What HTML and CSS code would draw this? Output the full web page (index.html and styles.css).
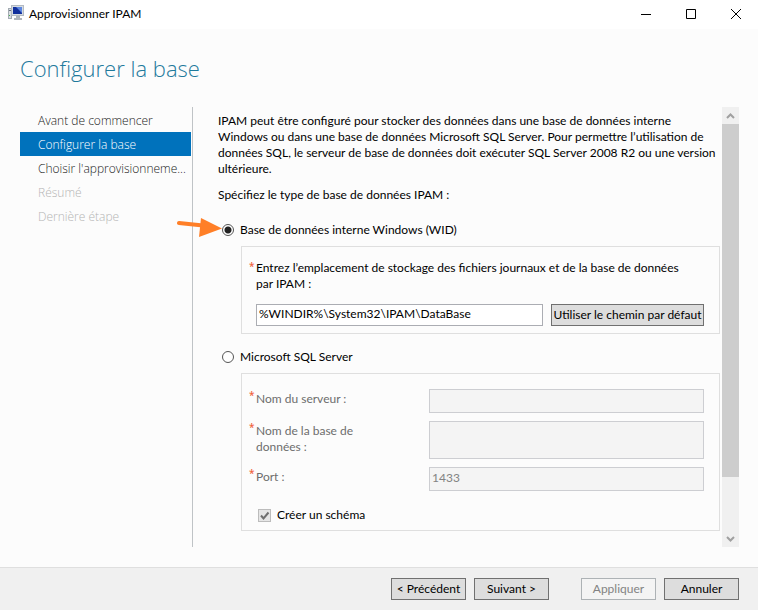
FILE: index.html
```html
<!DOCTYPE html>
<html lang="fr">
<head>
  <meta charset="UTF-8" />
  <meta name="viewport" content="width=device-width, initial-scale=1.0"/>
  <title>Approvisionner IPAM</title>
  <link rel="stylesheet" href="styles.css">
</head>
<body>
  <header class="titlebar">
    <svg class="app-icon" width="16" height="16" viewBox="0 0 16 16" aria-hidden="true">
      <rect x="0.5" y="3.5" width="3" height="10" fill="#d8dde2" stroke="#a3abb2"/>
      <rect x="1" y="5" width="2" height="1" fill="#6c757d"/>
      <rect x="1" y="10" width="1" height="1" fill="#49b04c"/>
      <rect x="3.5" y="0.5" width="12" height="10" fill="#d5dbe1" stroke="#b3bac2"/>
      <rect x="5" y="2" width="9" height="7" fill="#12309c"/>
      <path d="M8 2h6v6z" fill="#5c86e0"/>
      <path d="M8 11h4v2h2v2H6v-2h2z" fill="#b0b6bc"/>
    </svg>
    <span class="titlebar-text">Approvisionner IPAM</span>
    <div class="window-buttons">
      <button type="button" aria-label="Réduire"><svg width="10" height="10" viewBox="0 0 10 10"><path d="M0 5.5h10"/></svg></button>
      <button type="button" aria-label="Agrandir"><svg width="10" height="10" viewBox="0 0 10 10"><path d="M.5 .5h9v9h-9z"/></svg></button>
      <button type="button" aria-label="Fermer"><svg width="10" height="10" viewBox="0 0 10 10"><path d="M0 0l10 10M10 0L0 10"/></svg></button>
    </div>
  </header>

  <form class="wizard">
    <h1>Configurer la base</h1>
    <div class="columns">
      <nav class="steps">
        <a href="#">Avant de commencer</a>
        <a href="#" class="active" aria-current="step">Configurer la base</a>
        <a href="#">Choisir l'approvisionneme...</a>
        <a class="disabled">Résumé</a>
        <a class="disabled">Dernière étape</a>
      </nav>

      <main class="content">
        <p>IPAM peut être configuré pour stocker des données dans une base de données interne Windows ou dans une base de données Microsoft SQL Server. Pour permettre l’utilisation de données SQL, le serveur de base de données doit exécuter SQL Server 2008 R2 ou une version ultérieure.</p>
        <p>Spécifiez le type de base de données IPAM :</p>

        <label class="choice">
          <input type="radio" name="base" value="wid" checked>
          Base de données interne Windows (WID)
          <svg class="arrow" width="46" height="20" viewBox="0 0 46 20" aria-hidden="true">
            <path d="M2 5l24 2.500" stroke="#ff7f27" stroke-width="4" stroke-linecap="round"/>
            <path d="M24 0L45 10.500L22 19z" fill="#ff7f27"/>
          </svg>
        </label>
        <section class="group">
          <label class="required" for="chemin">Entrez l’emplacement de stockage des fichiers journaux et de la base de données par IPAM :</label>
          <div class="path-row">
            <input type="text" id="chemin" value="%WINDIR%\System32\IPAM\DataBase">
            <button type="button" class="btn">Utiliser le chemin par défaut</button>
          </div>
        </section>

        <label class="choice">
          <input type="radio" name="base" value="sql">
          Microsoft SQL Server
        </label>
        <section class="group">
          <div class="fields">
            <label class="required" for="serveur">Nom du serveur :</label>
            <input type="text" id="serveur" disabled>
            <label class="required" for="nom">Nom de la base de données :</label>
            <input type="text" id="nom" disabled>
            <label class="required" for="port">Port :</label>
            <input type="text" id="port" value="1433" disabled>
          </div>
          <label class="check">
            <input type="checkbox" checked disabled>
            Créer un schéma
          </label>
        </section>
      </main>

      <div class="scrollbar">
        <button type="button" aria-label="Défiler vers le haut"><svg width="9" height="6" viewBox="0 0 9 6"><path d="M1 5l3.500-3.500L8 5"/></svg></button>
        <div class="track"><div class="thumb"></div></div>
        <button type="button" aria-label="Défiler vers le bas"><svg width="9" height="6" viewBox="0 0 9 6"><path d="M1 1l3.500 3.500L8 1"/></svg></button>
      </div>
    </div>
  </form>

  <footer>
    <button type="button" class="btn">&lt; Précédent</button>
    <button type="button" class="btn">Suivant &gt;</button>
    <button type="button" class="btn apply" disabled>Appliquer</button>
    <button type="button" class="btn">Annuler</button>
  </footer>
</body>
</html>
```
FILE: styles.css
```css
:root {
  --bg: #fcfcfc;
  --accent: #0072bc;
  --title: #1f7a9c;
  --button: #dddddd;
}
* {
  box-sizing: border-box;
}
body {
  margin: 0;
  min-height: 100vh;
  display: flex;
  flex-direction: column;
  background: var(--bg);
  color: #000;
  font-family: 'Segoe UI', Lato, 'Open Sans', sans-serif;
  font-size: 12px;
  line-height: 16px;
}
button, input {
  font: inherit;
  color: inherit;
  margin: 0;
}
.titlebar {
  display: flex;
  align-items: center;
  height: 29px;
  padding-left: 8px;
  background: #fff;
}
.app-icon {
  margin: 0 5px 4px 0;
}
.titlebar-text {
  flex: 1;
  padding-bottom: 2px;
}
.window-buttons {
  display: flex;
  padding-bottom: 2px;
}
.window-buttons button {
  display: flex;
  align-items: center;
  justify-content: center;
  width: 45px;
  height: 26px;
  padding: 0;
  border: none;
  background: none;
}
.window-buttons svg {
  fill: none;
  stroke: #000;
}
.wizard {
  flex: 1;
  display: flex;
  flex-direction: column;
  padding: 21px 19px 20px 20px;
}
h1 {
  margin: 0 0 21px;
  font-family: 'Segoe UI', 'Open Sans', sans-serif;
  font-size: 22px;
  font-weight: 300;
  line-height: 36px;
  color: var(--title);
}
.columns {
  flex: 1;
  display: flex;
}
.steps {
  flex: 0 0 173px;
  min-width: 0;
  padding: 1px 1px 0 0;
  border-right: 1px solid #bfc3c6;
  font-family: 'Segoe UI', 'Open Sans', sans-serif;
  font-weight: 300;
}
.steps a {
  display: block;
  height: 24px;
  padding: 2px 0 0 18px;
  line-height: 22px;
  color: #222;
  text-decoration: none;
  white-space: nowrap;
}
.steps .active {
  background: var(--accent);
  color: #fff;
}
.steps .disabled {
  color: #b4b4b4;
}
.content {
  flex: 1;
  min-width: 0;
  padding: 6px 2px 0 25px;
}
.content p {
  margin: 0 0 10px;
}
.choice {
  position: relative;
  display: flex;
  align-items: center;
  gap: 6px;
  margin-top: 19px;
  padding-left: 4px;
}
.group + .choice {
  margin-top: 15px;
}
.choice input {
  appearance: none;
  width: 12px;
  height: 12px;
  border: 1px solid #555;
  border-radius: 50%;
  background: #fff;
}
.choice input:checked {
  background: radial-gradient(circle, #222 3px, #fff 4px);
}
.arrow {
  position: absolute;
  left: -41px;
  top: -4px;
}
.group {
  margin: 8px 0 0 23px;
  padding: 13px 15px 7px 14px;
  border: 1px solid #dfdfdf;
}
.required {
  position: relative;
  display: block;
  padding-right: 12px;
}
.required::before {
  content: '*';
  position: absolute;
  left: -7px;
  top: -2px;
  font-family: 'Open Sans', sans-serif;
  font-size: 10px;
  font-weight: 600;
  color: #f0643c;
}
input[type="text"] {
  min-width: 0;
  padding: 0 2px 3px;
  border: 1px solid #abadb3;
  background: #fff;
}
input[type="text"]:disabled {
  border-color: #cdced2;
  background: #f4f4f4;
  color: #838383;
}
.path-row {
  display: flex;
  gap: 8px;
  margin-top: 12px;
}
.path-row input {
  flex: 1;
}
.path-row .btn {
  width: 153px;
}
.btn {
  width: 75px;
  height: 22px;
  padding: 0;
  border: 1px solid #707070;
  background: var(--button);
  line-height: 20px;
  white-space: nowrap;
}
.btn:disabled {
  border-color: #adb2b5;
  background: #f4f4f4;
  color: #838383;
}
.fields {
  display: grid;
  grid-template-columns: 1fr 275px;
  grid-template-rows: 24px 38px 24px;
  gap: 8px;
  padding-top: 2px;
}
.fields .required {
  max-width: 120px;
  padding-top: 2px;
  color: #6d6d6d;
}
.check {
  display: flex;
  align-items: center;
  gap: 6px;
  margin: 16px 0 0 2px;
}
.check input {
  appearance: none;
  width: 13px;
  height: 13px;
  border: 1px solid #bcbcbc;
  background: #e6e6e6 url("data:image/svg+xml,%3Csvg xmlns='http://www.w3.org/2000/svg' viewBox='0 0 11 11'%3E%3Cpath d='M2 5.500l2.500 3L9.500 2.500' fill='none' stroke='%23707070' stroke-width='2'/%3E%3C/svg%3E");
}
.scrollbar {
  display: flex;
  flex-direction: column;
  width: 17px;
  background: #f0f0f0;
}
.scrollbar button {
  display: flex;
  align-items: center;
  justify-content: center;
  height: 17px;
  padding: 0;
  border: none;
  background: none;
}
.scrollbar svg {
  fill: none;
  stroke: #a0a0a0;
  stroke-width: 2;
}
.track {
  flex: 1;
}
.thumb {
  height: 87%;
  background: #cdcdcd;
}
footer {
  display: flex;
  justify-content: flex-end;
  gap: 8px;
  padding: 10px 19px;
  border-top: 1px solid #dfdfdf;
  background: #f0f0f0;
}
.apply {
  margin-left: 24px;
}
```
